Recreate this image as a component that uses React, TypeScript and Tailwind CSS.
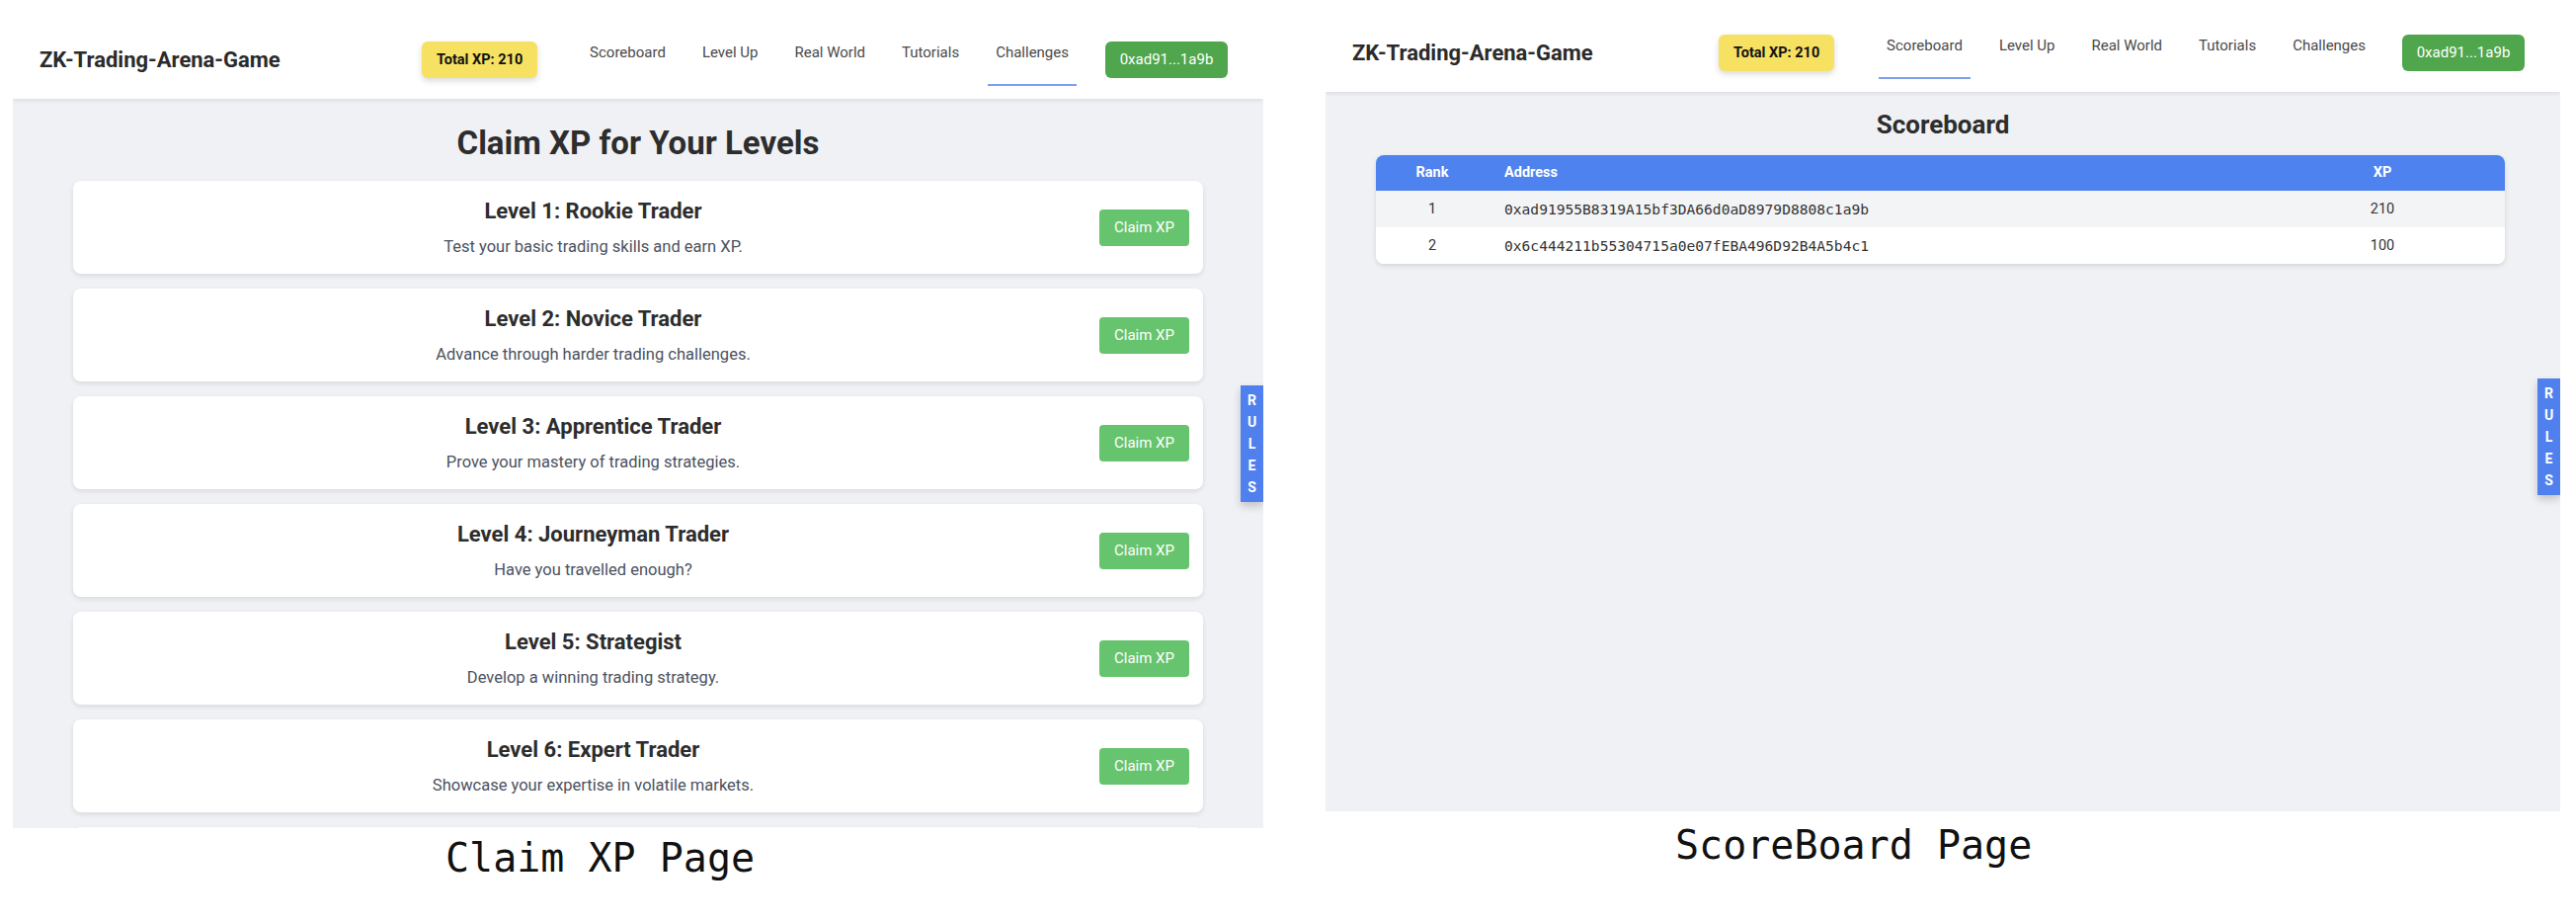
import React from 'react';

const NAV_ITEMS = ['Scoreboard', 'Level Up', 'Real World', 'Tutorials', 'Challenges'];

const LEVELS = [
	{ title: 'Level 1: Rookie Trader', desc: 'Test your basic trading skills and earn XP.' },
	{ title: 'Level 2: Novice Trader', desc: 'Advance through harder trading challenges.' },
	{ title: 'Level 3: Apprentice Trader', desc: 'Prove your mastery of trading strategies.' },
	{ title: 'Level 4: Journeyman Trader', desc: 'Have you travelled enough?' },
	{ title: 'Level 5: Strategist', desc: 'Develop a winning trading strategy.' },
	{ title: 'Level 6: Expert Trader', desc: 'Showcase your expertise in volatile markets.' },
];

const SCORES = [
	{ rank: 1, address: '0xad91955B8319A15bf3DA66d0aD8979D8808c1a9b', xp: 210 },
	{ rank: 2, address: '0x6c444211b55304715a0e07fEBA496D92B4A5b4c1', xp: 100 },
];

function Header({ active }: { active: string }) {
	return (
		<header className="relative z-10 flex h-[93px] shrink-0 items-center justify-between bg-white pl-[27px] pr-[36px] shadow-[0_2px_4px_rgba(0,0,0,0.08)]">
			<h1 className="mt-[14px] text-[22px] font-bold leading-[28px] text-[#2b2b2b]">ZK-Trading-Arena-Game</h1>
			<div className="flex items-center">
				<div className="mt-[14px] flex h-[37px] w-[117px] items-center justify-center rounded-md bg-[#f6e163] text-[14.5px] font-bold text-[#111] shadow-[0_3px_6px_rgba(0,0,0,0.15)]">
					Total XP: 210
				</div>
				<nav className="ml-[45px] flex gap-[21px]">
					{NAV_ITEMS.map((item) => (
						<a
							key={item}
							className={`border-b-2 px-2 pb-[22px] pt-[23px] text-[15px] leading-[20px] text-[#4a4a4a] ${
								item === active ? 'border-[#7d9ff0]' : 'border-transparent'
							}`}>
							{item}
						</a>
					))}
				</nav>
				<div className="ml-[29px] mt-[14px] flex h-[37px] w-[124px] items-center justify-center rounded-md bg-[#50a64d] text-[15px] text-white">
					0xad91...1a9b
				</div>
			</div>
		</header>
	);
}

function RulesTab() {
	return (
		<div className="absolute right-0 top-[383px] z-20 flex h-[118px] w-[23px] flex-col items-center justify-between bg-[#4f80ee] py-[7px] text-[14px] font-bold leading-[16px] text-white shadow-[0_4px_8px_rgba(0,0,0,0.2)]">
			<span>R</span>
			<span>U</span>
			<span>L</span>
			<span>E</span>
			<span>S</span>
		</div>
	);
}

function ClaimXpPage() {
	return (
		<div className="relative flex h-[831px] flex-col overflow-hidden">
			<Header active="Challenges" />
			<main className="flex-1 overflow-hidden bg-[#f0f1f5] pt-[25px]">
				<h2 className="mb-[19px] text-center text-[33px] font-bold leading-[39px] text-[#2d2d2d]">Claim XP for Your Levels</h2>
				<div className="mx-[61px] flex flex-col gap-[15px]">
					{LEVELS.map((level) => (
						<div
							key={level.title}
							className="flex h-[94px] shrink-0 items-center rounded-lg bg-white px-[14px] shadow-[0_2px_5px_rgba(0,0,0,0.1)]">
							<div className="flex flex-1 flex-col items-center self-start pt-[18px]">
								<h3 className="text-[22px] font-bold leading-[26px] text-[#2d2d2d]">{level.title}</h3>
								<p className="mt-[11px] text-[16.5px] leading-[24px] text-[#4b5260]">{level.desc}</p>
							</div>
							<button className="h-[37px] w-[91px] rounded bg-[#67c46e] text-[15px] text-white">Claim XP</button>
						</div>
					))}
					{/* next card, only its top edge is in view */}
					<div className="h-[94px] shrink-0 rounded-lg bg-white shadow-[0_2px_5px_rgba(0,0,0,0.1)]" />
				</div>
			</main>
			<RulesTab />
		</div>
	);
}

function ScoreboardPage() {
	return (
		<div className="relative flex h-[821px] flex-col overflow-hidden">
			<Header active="Scoreboard" />
			<main className="flex-1 bg-[#f0f1f5] pt-[18px]">
				<h2 className="mb-[15px] text-center text-[26px] font-bold leading-[31px] text-[#2d2d2d]">Scoreboard</h2>
				<div className="ml-[51px] w-[1143px] overflow-hidden rounded-lg bg-white shadow-[0_2px_5px_rgba(0,0,0,0.12)]">
					<div className="grid h-[36px] grid-cols-[114px_1fr_248px] items-center bg-[#4e82ee] text-[14.5px] font-bold text-white">
						<div className="text-center">Rank</div>
						<div className="pl-[16px]">Address</div>
						<div className="text-center">XP</div>
					</div>
					{SCORES.map((row, i) => (
						<div
							key={row.rank}
							className={`grid h-[37px] grid-cols-[114px_1fr_248px] items-center text-[14.5px] text-[#333] ${
								i === 0 ? 'bg-[#f3f4f6]' : 'bg-white'
							}`}>
							<div className="text-center">{row.rank}</div>
							<div className="pl-[16px] font-['DejaVu_Sans_Mono',monospace] text-[14.6px]">{row.address}</div>
							<div className="text-center">{row.xp}</div>
						</div>
					))}
				</div>
			</main>
			<RulesTab />
		</div>
	);
}

export default function App() {
	return (
		<div className="flex h-[934px] w-[2608px] items-start bg-white font-['Roboto',sans-serif]">
			<div className="ml-[13px] mt-[7px] w-[1266px]">
				<ClaimXpPage />
				<p className="mt-[6px] pl-[438px] font-['DejaVu_Sans_Mono',monospace] text-[40px] leading-[48px] text-[#111]">Claim XP Page</p>
			</div>
			<div className="ml-[63px] w-[1250px]">
				<ScoreboardPage />
				<p className="mt-[10px] pl-[354px] font-['DejaVu_Sans_Mono',monospace] text-[40px] leading-[48px] text-[#111]">ScoreBoard Page</p>
			</div>
		</div>
	);
}
